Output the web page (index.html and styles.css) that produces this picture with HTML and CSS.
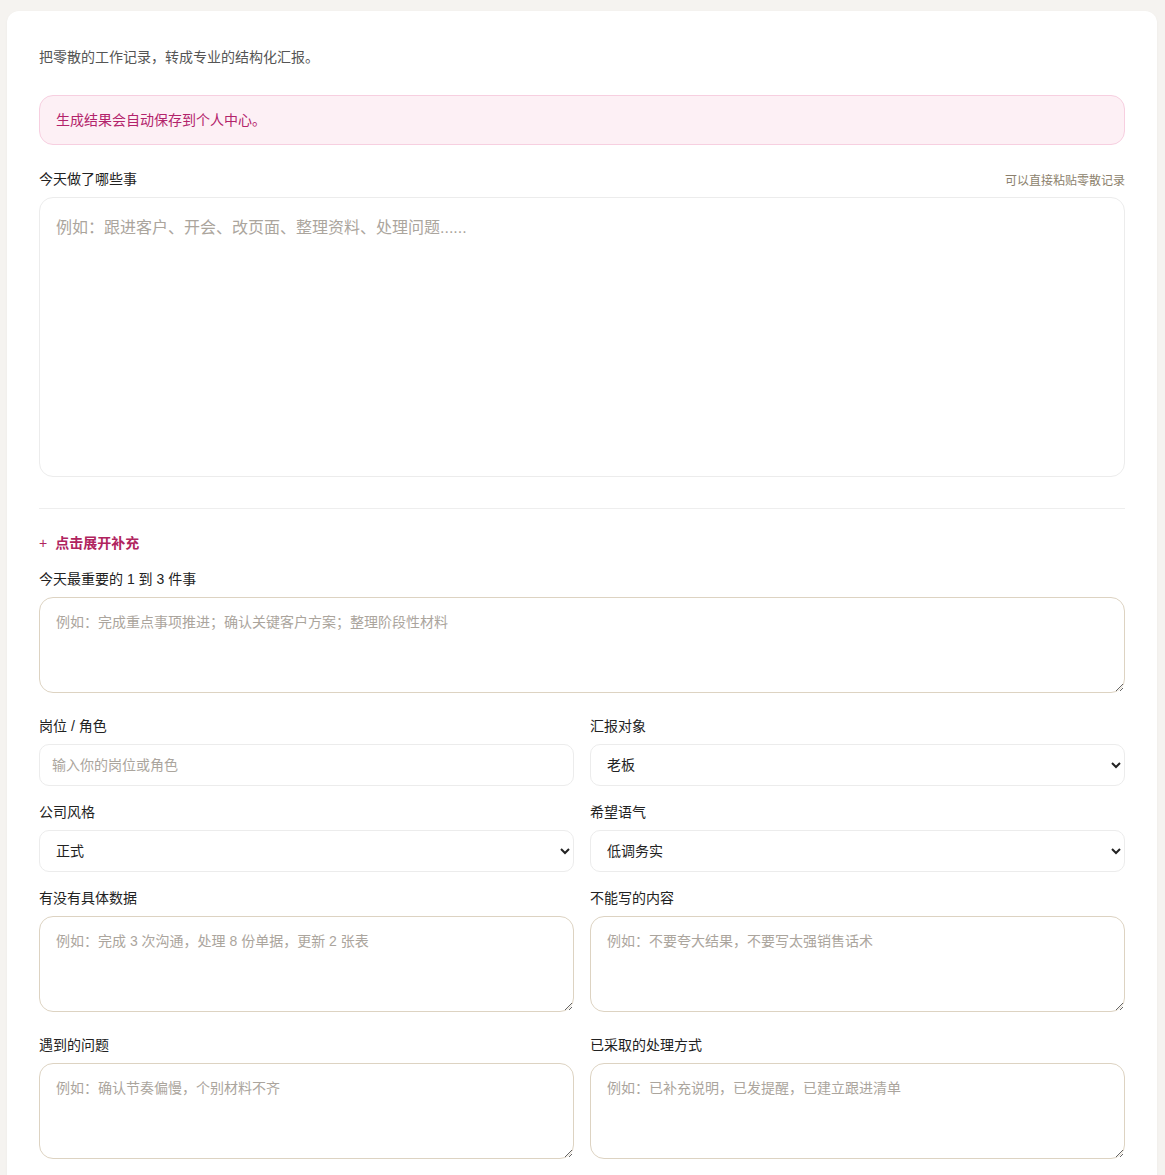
FILE: index.html
```html
<!DOCTYPE html>
<html lang="zh-CN">
<head>
    <meta charset="UTF-8">
    <meta name="viewport" content="width=device-width, initial-scale=1.0">
    <title>工作日报生成</title>
    <link rel="stylesheet" href="styles.css">
</head>

<body>
    <div class="page">
        <div class="card">
            <p class="intro">把零散的工作记录，转成专业的结构化汇报。</p>

            <div class="notice">生成结果会自动保存到个人中心。</div>

            <div class="label-row">
                <label for="today">今天做了哪些事</label>
                <span class="hint">可以直接粘贴零散记录</span>
            </div>
            <textarea id="today" class="main-input" placeholder="例如：跟进客户、开会、改页面、整理资料、处理问题......"></textarea>

            <hr class="divider">

            <a href="#" class="toggle"><span class="plus">+</span>点击展开补充</a>

            <!-- 补充信息 -->
            <div class="field">
                <label for="top3">今天最重要的 1 到 3 件事</label>
                <textarea id="top3" class="extra" placeholder="例如：完成重点事项推进；确认关键客户方案；整理阶段性材料"></textarea>
            </div>

            <div class="grid">
                <div class="field">
                    <label for="role">岗位 / 角色</label>
                    <input id="role" type="text" placeholder="输入你的岗位或角色">
                </div>
                <div class="field">
                    <label for="target">汇报对象</label>
                    <select id="target">
                        <option>老板</option>
                        <option>直属上级</option>
                        <option>团队</option>
                    </select>
                </div>
                <div class="field">
                    <label for="style">公司风格</label>
                    <select id="style">
                        <option>正式</option>
                        <option>轻松</option>
                    </select>
                </div>
                <div class="field">
                    <label for="tone">希望语气</label>
                    <select id="tone">
                        <option>低调务实</option>
                        <option>积极主动</option>
                    </select>
                </div>
                <div class="field">
                    <label for="data">有没有具体数据</label>
                    <textarea id="data" class="extra" placeholder="例如：完成 3 次沟通，处理 8 份单据，更新 2 张表"></textarea>
                </div>
                <div class="field">
                    <label for="avoid">不能写的内容</label>
                    <textarea id="avoid" class="extra" placeholder="例如：不要夸大结果，不要写太强销售话术"></textarea>
                </div>
                <div class="field">
                    <label for="issues">遇到的问题</label>
                    <textarea id="issues" class="extra" placeholder="例如：确认节奏偏慢，个别材料不齐"></textarea>
                </div>
                <div class="field">
                    <label for="actions">已采取的处理方式</label>
                    <textarea id="actions" class="extra" placeholder="例如：已补充说明，已发提醒，已建立跟进清单"></textarea>
                </div>
            </div>
        </div>
    </div>
</body>
</html>
```

FILE: styles.css
```css
body {
    font-family: "Liberation Sans", "Noto Sans CJK SC", sans-serif;
    margin: 0;
    padding: 0;
    background-color: #f5f3f0;
    color: #222;
}

.page {
    padding: 11px 8px 0 7px;
}

.card {
    background: #fff;
    border-radius: 12px;
    box-shadow: 0 1px 3px rgba(0, 0, 0, 0.04);
    padding: 36px 32px 60px 32px;
}

.intro {
    margin: 0;
    font-size: 14px;
    line-height: 20px;
    color: #555;
}

.notice {
    margin-top: 28px;
    height: 48px;
    line-height: 48px;
    padding: 0 16px;
    font-size: 14px;
    color: #b3236b;
    background: #fdf0f5;
    border: 1px solid #f7cfe0;
    border-radius: 14px;
}

.label-row {
    display: flex;
    justify-content: space-between;
    align-items: center;
    margin-top: 24px;
    margin-bottom: 8px;
}

label {
    font-size: 14px;
    line-height: 20px;
    color: #222;
}

.hint {
    font-size: 12px;
    color: #8c7f6c;
}

textarea, input, select {
    font-family: inherit;
    box-sizing: border-box;
    width: 100%;
    display: block;
    margin: 0;
    background: #fff;
    color: #222;
}

textarea::placeholder, input::placeholder {
    color: #aba59d;
}

.main-input {
    height: 280px;
    padding: 18px 16px 14px 16px;
    font-size: 16px;
    line-height: 24px;
    border: 1px solid #ececec;
    border-radius: 14px;
    resize: none;
}

.divider {
    border: 0;
    border-top: 1px solid #eeeeee;
    margin: 31px 0 24px 0;
}

.toggle {
    display: block;
    font-size: 14px;
    line-height: 20px;
    font-weight: bold;
    color: #b0245e;
    text-decoration: none;
}

.toggle .plus {
    font-weight: normal;
    margin-right: 8px;
}

.field {
    margin-top: 16px;
}

.field label {
    display: block;
    margin-bottom: 8px;
}

.extra {
    height: 96px;
    padding: 14px 16px;
    font-size: 14px;
    line-height: 20px;
    border: 1px solid #ddd3c2;
    border-radius: 14px;
}

.grid {
    display: grid;
    grid-template-columns: 1fr 1fr;
    column-gap: 16px;
    margin-top: 7px;
}

.grid .field:nth-child(n+7) {
    margin-top: 23px;
}

input {
    height: 42px;
    padding: 0 12px;
    font-size: 14px;
    border: 1px solid #ececec;
    border-radius: 10px;
    outline: none;
}

select {
    height: 42px;
    padding: 0 12px;
    font-size: 14px;
    border: 1px solid #ececec;
    border-radius: 10px;
}
```
